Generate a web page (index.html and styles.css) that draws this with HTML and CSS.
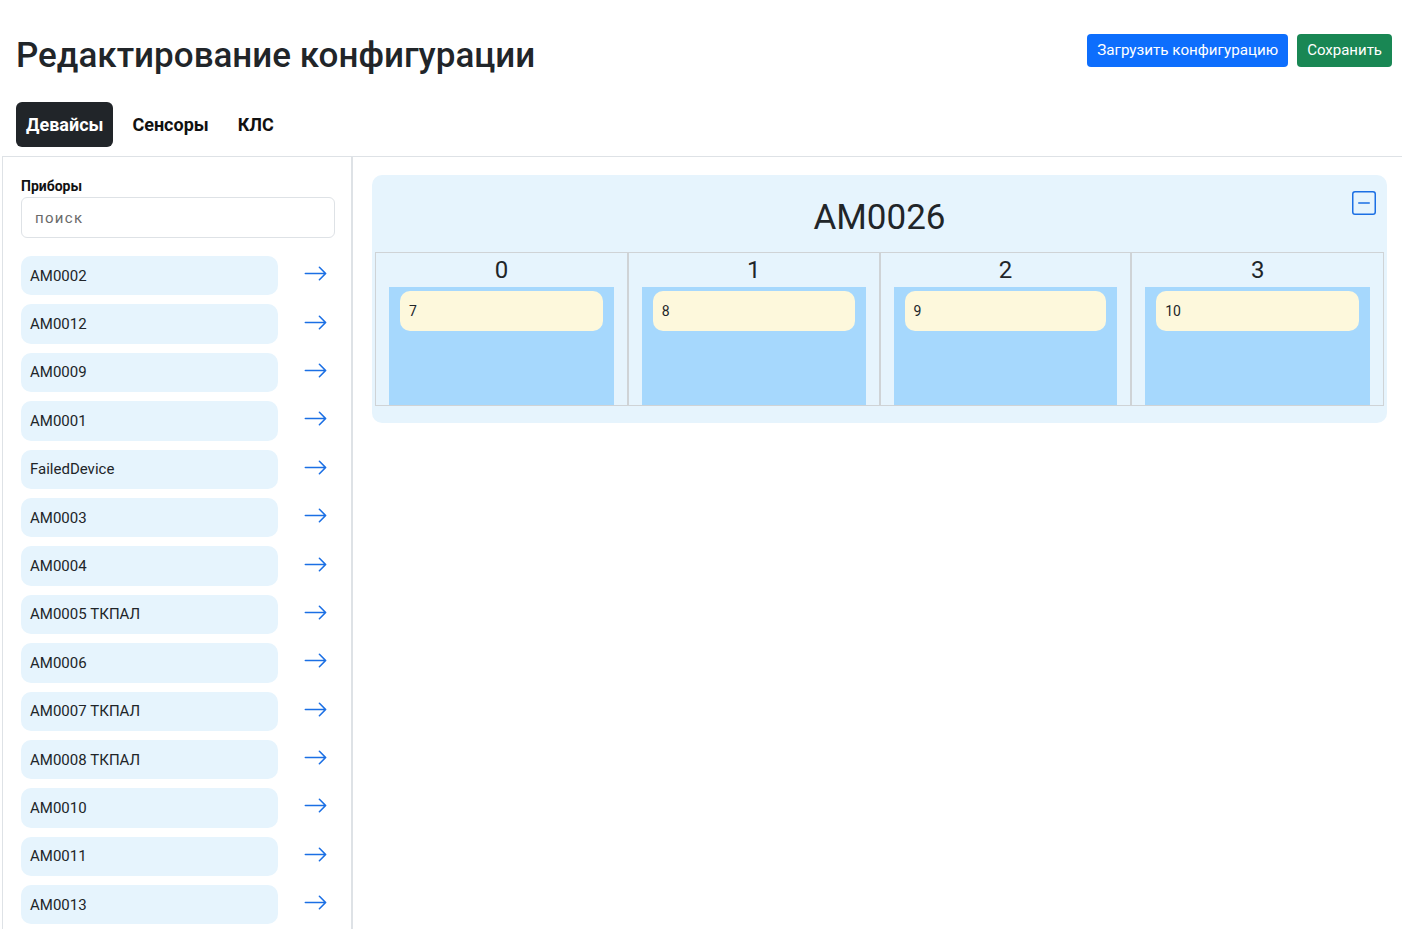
FILE: index.html
```html
<!DOCTYPE html>
<html lang="ru">
<head>
<meta charset="utf-8">
<title>Редактирование конфигурации</title>
<link rel="stylesheet" href="styles.css">
</head>
<body>
<header class="top">
  <h1 class="title">Редактирование конфигурации</h1>
  <div class="actions">
    <button class="btn btn-blue">Загрузить конфигурацию</button>
    <button class="btn btn-green">Сохранить</button>
  </div>
</header>
<nav class="tabs">
  <span class="tab active">Девайсы</span>
  <span class="tab">Сенсоры</span>
  <span class="tab">КЛС</span>
</nav>
<main class="main">
  <aside class="side">
    <div class="label">Приборы</div>
    <input class="search" placeholder="поиск">
    <ul class="list">
      <li class="row"><span class="item">AM0002</span><span class="go"><svg viewBox="0 0 16 16"><path d="M1 8a.5.5 0 0 1 .5-.5h11.793l-3.147-3.146a.5.5 0 0 1 .708-.708l4 4a.5.5 0 0 1 0 .708l-4 4a.5.5 0 0 1-.708-.708L13.293 8.5H1.5A.5.5 0 0 1 1 8"/></svg></span></li>
      <li class="row"><span class="item">AM0012</span><span class="go"><svg viewBox="0 0 16 16"><path d="M1 8a.5.5 0 0 1 .5-.5h11.793l-3.147-3.146a.5.5 0 0 1 .708-.708l4 4a.5.5 0 0 1 0 .708l-4 4a.5.5 0 0 1-.708-.708L13.293 8.5H1.5A.5.5 0 0 1 1 8"/></svg></span></li>
      <li class="row"><span class="item">AM0009</span><span class="go"><svg viewBox="0 0 16 16"><path d="M1 8a.5.5 0 0 1 .5-.5h11.793l-3.147-3.146a.5.5 0 0 1 .708-.708l4 4a.5.5 0 0 1 0 .708l-4 4a.5.5 0 0 1-.708-.708L13.293 8.5H1.5A.5.5 0 0 1 1 8"/></svg></span></li>
      <li class="row"><span class="item">AM0001</span><span class="go"><svg viewBox="0 0 16 16"><path d="M1 8a.5.5 0 0 1 .5-.5h11.793l-3.147-3.146a.5.5 0 0 1 .708-.708l4 4a.5.5 0 0 1 0 .708l-4 4a.5.5 0 0 1-.708-.708L13.293 8.5H1.5A.5.5 0 0 1 1 8"/></svg></span></li>
      <li class="row"><span class="item">FailedDevice</span><span class="go"><svg viewBox="0 0 16 16"><path d="M1 8a.5.5 0 0 1 .5-.5h11.793l-3.147-3.146a.5.5 0 0 1 .708-.708l4 4a.5.5 0 0 1 0 .708l-4 4a.5.5 0 0 1-.708-.708L13.293 8.5H1.5A.5.5 0 0 1 1 8"/></svg></span></li>
      <li class="row"><span class="item">AM0003</span><span class="go"><svg viewBox="0 0 16 16"><path d="M1 8a.5.5 0 0 1 .5-.5h11.793l-3.147-3.146a.5.5 0 0 1 .708-.708l4 4a.5.5 0 0 1 0 .708l-4 4a.5.5 0 0 1-.708-.708L13.293 8.5H1.5A.5.5 0 0 1 1 8"/></svg></span></li>
      <li class="row"><span class="item">AM0004</span><span class="go"><svg viewBox="0 0 16 16"><path d="M1 8a.5.5 0 0 1 .5-.5h11.793l-3.147-3.146a.5.5 0 0 1 .708-.708l4 4a.5.5 0 0 1 0 .708l-4 4a.5.5 0 0 1-.708-.708L13.293 8.5H1.5A.5.5 0 0 1 1 8"/></svg></span></li>
      <li class="row"><span class="item">AM0005 ТКПАЛ</span><span class="go"><svg viewBox="0 0 16 16"><path d="M1 8a.5.5 0 0 1 .5-.5h11.793l-3.147-3.146a.5.5 0 0 1 .708-.708l4 4a.5.5 0 0 1 0 .708l-4 4a.5.5 0 0 1-.708-.708L13.293 8.5H1.5A.5.5 0 0 1 1 8"/></svg></span></li>
      <li class="row"><span class="item">AM0006</span><span class="go"><svg viewBox="0 0 16 16"><path d="M1 8a.5.5 0 0 1 .5-.5h11.793l-3.147-3.146a.5.5 0 0 1 .708-.708l4 4a.5.5 0 0 1 0 .708l-4 4a.5.5 0 0 1-.708-.708L13.293 8.5H1.5A.5.5 0 0 1 1 8"/></svg></span></li>
      <li class="row"><span class="item">AM0007 ТКПАЛ</span><span class="go"><svg viewBox="0 0 16 16"><path d="M1 8a.5.5 0 0 1 .5-.5h11.793l-3.147-3.146a.5.5 0 0 1 .708-.708l4 4a.5.5 0 0 1 0 .708l-4 4a.5.5 0 0 1-.708-.708L13.293 8.5H1.5A.5.5 0 0 1 1 8"/></svg></span></li>
      <li class="row"><span class="item">AM0008 ТКПАЛ</span><span class="go"><svg viewBox="0 0 16 16"><path d="M1 8a.5.5 0 0 1 .5-.5h11.793l-3.147-3.146a.5.5 0 0 1 .708-.708l4 4a.5.5 0 0 1 0 .708l-4 4a.5.5 0 0 1-.708-.708L13.293 8.5H1.5A.5.5 0 0 1 1 8"/></svg></span></li>
      <li class="row"><span class="item">AM0010</span><span class="go"><svg viewBox="0 0 16 16"><path d="M1 8a.5.5 0 0 1 .5-.5h11.793l-3.147-3.146a.5.5 0 0 1 .708-.708l4 4a.5.5 0 0 1 0 .708l-4 4a.5.5 0 0 1-.708-.708L13.293 8.5H1.5A.5.5 0 0 1 1 8"/></svg></span></li>
      <li class="row"><span class="item">AM0011</span><span class="go"><svg viewBox="0 0 16 16"><path d="M1 8a.5.5 0 0 1 .5-.5h11.793l-3.147-3.146a.5.5 0 0 1 .708-.708l4 4a.5.5 0 0 1 0 .708l-4 4a.5.5 0 0 1-.708-.708L13.293 8.5H1.5A.5.5 0 0 1 1 8"/></svg></span></li>
      <li class="row"><span class="item">AM0013</span><span class="go"><svg viewBox="0 0 16 16"><path d="M1 8a.5.5 0 0 1 .5-.5h11.793l-3.147-3.146a.5.5 0 0 1 .708-.708l4 4a.5.5 0 0 1 0 .708l-4 4a.5.5 0 0 1-.708-.708L13.293 8.5H1.5A.5.5 0 0 1 1 8"/></svg></span></li>
    </ul>
  </aside>
  <section class="content">
    <div class="card">
      <div class="card-head">
        <h2 class="card-title">AM0026</h2>
        <span class="collapse"><svg viewBox="0 0 16 16"><path d="M14 1a1 1 0 0 1 1 1v12a1 1 0 0 1-1 1H2a1 1 0 0 1-1-1V2a1 1 0 0 1 1-1zM2 0a2 2 0 0 0-2 2v12a2 2 0 0 0 2 2h12a2 2 0 0 0 2-2V2a2 2 0 0 0-2-2z"/><path d="M4 8a.5.5 0 0 1 .5-.5h7a.5.5 0 0 1 0 1h-7A.5.5 0 0 1 4 8"/></svg></span>
      </div>
      <div class="slots">
        <div class="slot"><div class="slot-num">0</div><div class="slot-body"><div class="chip">7</div></div></div>
        <div class="slot"><div class="slot-num">1</div><div class="slot-body"><div class="chip">8</div></div></div>
        <div class="slot"><div class="slot-num">2</div><div class="slot-body"><div class="chip">9</div></div></div>
        <div class="slot"><div class="slot-num">3</div><div class="slot-body"><div class="chip">10</div></div></div>
      </div>
    </div>
  </section>
</main>
</body>
</html>
```
FILE: styles.css
```css
* { box-sizing: border-box; }
html, body { margin: 0; padding: 0; }
body {
  font-family: Roboto, "Liberation Sans", sans-serif;
  color: #212529;
  background: #fff;
  height: 929px;
  overflow: hidden;
}
.top {
  display: flex;
  justify-content: space-between;
  align-items: flex-start;
  padding: 0 10px 0 16px;
}
.title {
  margin: 35px 0 0;
  font-size: 35px;
  font-weight: 500;
  line-height: 42px;
}
.actions {
  display: flex;
  gap: 9px;
  margin-top: 34px;
}
.btn {
  font-family: inherit;
  font-size: 15px;
  line-height: 19px;
  padding: 7px 10px;
  border: 0;
  border-radius: 4px;
  color: #fff;
}
.btn-blue { background: #0d6efd; font-size: 15.2px; }
.btn-green { background: #198754; }
.tabs {
  display: flex;
  gap: 9px;
  padding: 25px 16px 9px;
}
.tab {
  font-size: 18px;
  font-weight: 700;
  padding: 13px 10px 12px;
  line-height: 20px;
  border-radius: 6px;
  color: #111;
}
.tab.active { background: #212529; color: #fff; }
.main {
  display: flex;
  border-top: 1px solid #dee2e6;
  margin-left: 2px;
  height: 773px;
}
.side {
  width: 351px;
  flex: none;
  border-left: 1px solid #dee2e6;
  border-right: 2px solid #dee2e6;
  padding: 21px 17px 0 18px;
}
.label {
  font-size: 14px;
  font-weight: 700;
  line-height: 17px;
  margin-bottom: 2px;
  color: #111;
}
.search {
  display: block;
  width: 314px;
  height: 41px;
  border: 1px solid #dee2e6;
  border-radius: 6px;
  padding: 0 13px;
  font-family: inherit;
  font-size: 15px;
  letter-spacing: 1.3px;
  color: #212529;
}
.search::placeholder { color: #6a6a6a; }
.list {
  list-style: none;
  margin: 18px 0 0;
  padding: 0;
  display: flex;
  flex-direction: column;
  gap: 9px;
}
.row {
  display: flex;
  align-items: center;
  height: 39.4px;
}
.item {
  width: 257px;
  height: 39.4px;
  background: #e6f4fd;
  border-radius: 10px;
  padding: 0 9px;
  display: flex;
  align-items: center;
  font-size: 15px;
}
.go {
  flex: 1;
  display: flex;
  justify-content: center;
  padding-left: 18px;
  padding-bottom: 4px;
}
.go svg { width: 25px; height: 25px; fill: #1b6fe4; }
.content {
  flex: 1;
  padding: 18px 15px 0 19px;
}
.card {
  background: #e6f4fd;
  border-radius: 10px;
  padding: 0 3px 17px;
}
.card-head {
  position: relative;
  height: 77px;
  display: flex;
  align-items: center;
  justify-content: center;
}
.card-title {
  margin: 7px 0 0;
  font-size: 35px;
  font-weight: 400;
}
.collapse {
  position: absolute;
  right: 8px;
  top: 16px;
  width: 24px;
  height: 24px;
}
.collapse svg { width: 24px; height: 24px; fill: #1b6fe4; display: block; }
.slots {
  display: grid;
  grid-template-columns: repeat(4, 1fr);
  border: 1px solid #cfd3d6;
}
.slot { border-left: 1px solid #cfd3d6; border-right: 1px solid #cfd3d6; padding: 0 13px; }
.slot:first-child { border-left: 0; }
.slot:last-child { border-right: 0; }
.slot-num {
  text-align: center;
  font-size: 24px;
  line-height: 34px;
}
.slot-body {
  background: #a6d8fd;
  height: 118px;
  padding: 4px 11px;
}
.chip {
  background: #fdf8dc;
  border-radius: 10px;
  height: 40px;
  padding: 0 9px;
  display: flex;
  align-items: center;
  font-size: 14px;
}
```
